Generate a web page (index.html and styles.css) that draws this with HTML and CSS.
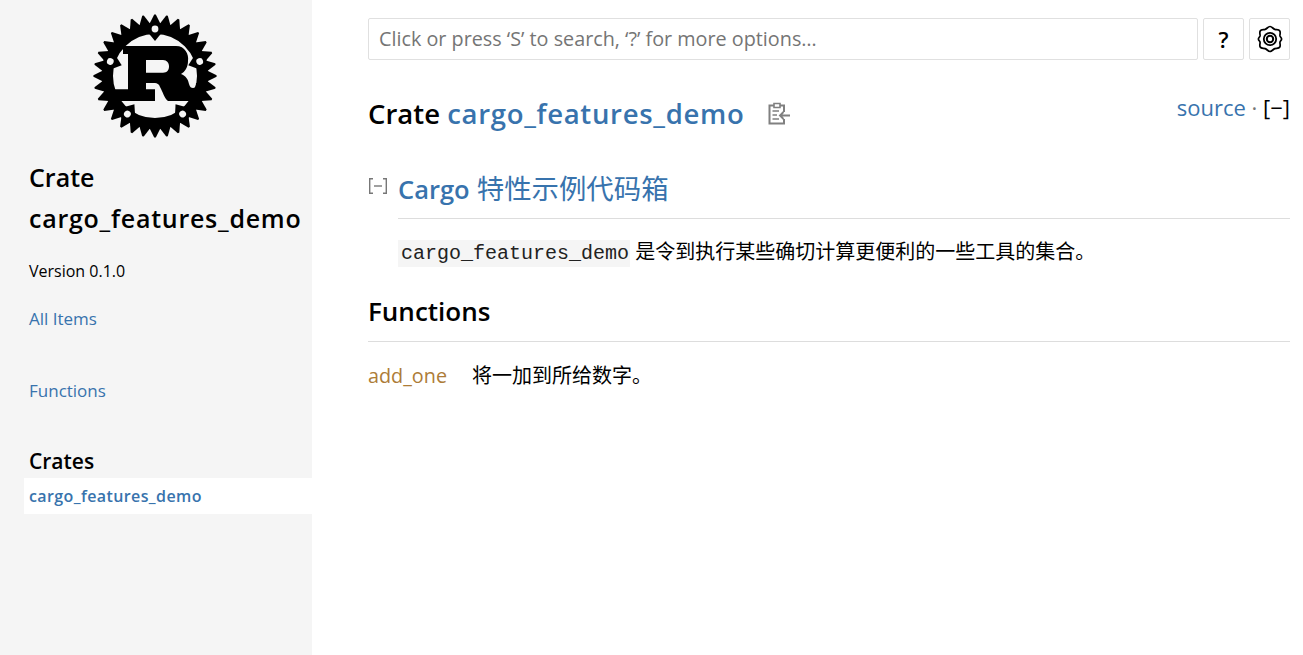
FILE: index.html
```html
<!DOCTYPE html>
<html lang="en">
<head>
  <meta charset="UTF-8">
  <meta name="viewport" content="width=device-width, initial-scale=1.0">
  <title>cargo_features_demo - Rust</title>
  <link rel="stylesheet" href="styles.css">
</head>
<body>
  <nav class="sidebar">
    <a class="logo" href="#">
      <svg width="124" height="124" viewBox="-62 -62 124 124">
        <defs>
          <polygon id="t1" points="-5.6,-52 -0.8,-61.6 0.8,-61.6 5.6,-52"/>
          <g id="t2"><use href="#t1"/><use href="#t1" transform="rotate(11.25)"/></g>
          <g id="t4"><use href="#t2"/><use href="#t2" transform="rotate(22.5)"/></g>
          <g id="t8"><use href="#t4"/><use href="#t4" transform="rotate(45)"/></g>
          <g id="t16"><use href="#t8"/><use href="#t8" transform="rotate(90)"/></g>
          <g id="lug">
            <polygon points="-9,-46 9,-46 0,-35"/>
            <circle cx="0" cy="-47" r="7"/>
          </g>
          <circle id="hole" cx="0" cy="-47" r="3.4" fill="#f5f5f5"/>
        </defs>
        <use href="#t16"/><use href="#t16" transform="rotate(180)"/>
        <circle r="47.5" fill="none" stroke="#000" stroke-width="11" cx="0" cy="0"/>
        <use href="#lug"/>
        <use href="#lug" transform="rotate(72)"/>
        <use href="#lug" transform="rotate(144)"/>
        <use href="#lug" transform="rotate(216)"/>
        <use href="#lug" transform="rotate(288)"/>
        <use href="#hole"/>
        <use href="#hole" transform="rotate(72)"/>
        <use href="#hole" transform="rotate(144)"/>
        <use href="#hole" transform="rotate(216)"/>
        <use href="#hole" transform="rotate(288)"/>
        <path fill-rule="evenodd" d="M-32,-30 H21 C30,-30 34,-22 33,-15 C33,-9 30,-4 26,-2 C31,0 33,3 34,8 C35,11 36,12 38,12 C40,12 41,10 41,7 H45 V25 H13 C9,22 8,16 5,11 C4,8 2,7 0,7 H-9 V13.3 H0 V25 H-44 V13.3 H-27 V-22 H-32 Z M-9,-16 H8 C12,-16 14,-13 14,-9.5 C14,-6 12,-3.3 8,-3.3 H-9 Z"/>
      </svg>
    </a>
    <h2 class="crate-title">Crate<br><span class="crate-name">cargo_features_demo</span></h2>
    <p class="version">Version 0.1.0</p>
    <a class="side-link all-items" href="#">All Items</a>
    <a class="side-link functions-link" href="#">Functions</a>
    <h3 class="crates-head">Crates</h3>
    <a class="current-crate" href="#">cargo_features_demo</a>
  </nav>

  <main class="content">
    <div class="search-row">
      <input class="search" type="text" placeholder="Click or press ‘S’ to search, ‘?’ for more options…">
      <button class="square-btn">?</button>
      <button class="square-btn">
        <svg width="26" height="28" viewBox="0 0 26 28" fill="none" stroke="#000">
          <path stroke-width="1.7" d="M13,1.5 C15,1.5 16,3.8 17.8,4.4 C19.6,5 21.8,4.2 22.8,6 C23.8,7.8 22.6,9.6 23,11 C23.4,12.2 24.6,12.6 24.6,14 C24.6,15.4 23.4,15.8 23,17 C22.6,18.4 23.8,20.2 22.8,22 C21.8,23.8 19.6,23 17.8,23.6 C16,24.2 15,26.5 13,26.5 C11,26.5 10,24.2 8.2,23.6 C6.4,23 4.2,23.8 3.2,22 C2.2,20.2 3.4,18.4 3,17 C2.6,15.8 1.4,15.4 1.4,14 C1.4,12.6 2.6,12.2 3,11 C3.4,9.6 2.2,7.8 3.2,6 C4.2,4.2 6.4,5 8.2,4.4 C10,3.8 11,1.5 13,1.5 Z"/>
          <circle cx="13" cy="14" r="6.2" stroke-width="1.8"/>
          <circle cx="13" cy="14" r="3.2" stroke-width="2"/>
        </svg>
      </button>
    </div>

    <div class="title-row">
      <h1 class="page-title">Crate <a href="#">cargo_features_demo</a>
        <svg class="copy-icon" width="22" height="23" viewBox="0 0 22 23" fill="none" stroke="#808080" stroke-width="2">
          <path d="M6,3.5 H1.5 V21.5 H16 V17"/>
          <path d="M16,10 V3.5 H12"/>
          <path d="M6,1.5 H12 V5.5 H6 Z" stroke-width="1.6"/>
          <path d="M4.5,9 H11 M4.5,13 H9 M4.5,17 H11" stroke-width="1.7"/>
          <path d="M22,13.5 H12 M15.5,10 L12,13.5 L15.5,17" stroke-width="1.9"/>
        </svg>
      </h1>
      <div class="out-of-band"><a href="#">source</a> <span class="dot">·</span> <span class="toggle-all">[−]</span></div>
    </div>

    <section class="docblock">
      <svg class="toggle-box" width="18" height="16" viewBox="0 0 18 16" fill="none" stroke="#777" stroke-width="1.4">
        <path d="M4,0.7 H0.7 V15.3 H4"/>
        <path d="M14,0.7 H17.3 V15.3 H14"/>
        <path d="M5,8 H13"/>
      </svg>
      <div class="doc-body">
        <h2 class="doc-head"><strong>Cargo</strong> 特性示例代码箱</h2>
        <p class="doc-text"><code>cargo_features_demo</code> 是令到执行某些确切计算更便利的一些工具的集合。</p>
      </div>
    </section>

    <h2 class="section-head">Functions</h2>
    <div class="item-row">
      <a class="fn-link" href="#">add_one</a>
      <span class="fn-desc">将一加到所给数字。</span>
    </div>
  </main>
</body>
</html>
```

FILE: styles.css
```css
* {
  box-sizing: border-box;
}
html, body {
  height: 100%;
}
body {
  margin: 0;
  display: flex;
  overflow: hidden;
  background-color: #fff;
  color: #000;
  font-family: "Open Sans", "Noto Sans CJK SC", sans-serif;
  font-size: 20px;
}
a {
  color: #3873ad;
  text-decoration: none;
}

/* sidebar */
.sidebar {
  width: 312px;
  flex-shrink: 0;
  background-color: #f5f5f5;
  padding: 14px 0 0 24px;
}
.logo {
  display: block;
  width: 124px;
  height: 124px;
  margin-left: 69px;
}
.logo svg {
  display: block;
}
.crate-title {
  margin: 19px 0 0 5px;
  font-size: 25px;
  font-weight: 600;
  line-height: 41px;
  white-space: nowrap;
}
.crate-name {
  letter-spacing: 0.75px;
}
.version {
  margin: 20px 0 0 5px;
  font-size: 16px;
  line-height: 24px;
}
.side-link {
  display: block;
  margin-left: 5px;
  font-size: 17px;
  line-height: 24px;
}
.all-items {
  margin-top: 24px;
}
.functions-link {
  margin-top: 48px;
}
.crates-head {
  margin: 46px 0 0 5px;
  font-size: 21px;
  font-weight: 600;
  line-height: 24px;
}
.current-crate {
  display: block;
  height: 36px;
  margin-top: 5px;
  padding-left: 5px;
  background-color: #fff;
  font-size: 16px;
  font-weight: 600;
  letter-spacing: 0.4px;
  line-height: 36px;
}

/* main column */
.content {
  flex: 1;
  min-width: 0;
  padding: 18px 13px 0 56px;
}
.search-row {
  display: flex;
  gap: 5px;
  height: 42px;
}
.search {
  flex: 1;
  min-width: 0;
  padding: 0 10px 2px;
  border: 1px solid #e0e0e0;
  border-radius: 2px;
  font-family: inherit;
  font-size: 19.8px;
  color: #000;
}
.search::placeholder {
  color: #757575;
  opacity: 1;
}
.square-btn {
  display: flex;
  align-items: center;
  justify-content: center;
  width: 41px;
  padding: 0;
  border: 1px solid #e0e0e0;
  border-radius: 2px;
  background-color: #fff;
  color: #000;
  font-family: inherit;
  font-size: 22px;
  font-weight: 600;
}

.title-row {
  display: flex;
  justify-content: space-between;
  align-items: flex-start;
  margin-top: 32px;
}
.page-title {
  margin: 0;
  font-size: 27.5px;
  font-weight: 600;
  line-height: 44px;
}
.page-title a {
  letter-spacing: 0.7px;
}
.copy-icon {
  margin-left: 16px;
  vertical-align: -1px;
}
.out-of-band {
  font-size: 22px;
  line-height: 30px;
}
.dot {
  color: #777;
}

.docblock {
  display: flex;
  margin-top: 33px;
}
.toggle-box {
  flex-shrink: 0;
  margin: 9px 11px 0 1px;
}
.doc-body {
  flex: 1;
  min-width: 0;
}
.doc-head {
  margin: 0;
  padding-bottom: 9px;
  border-bottom: 1px solid #ddd;
  color: #3873ad;
  font-size: 27.4px;
  font-weight: 400;
  line-height: 40px;
}
.doc-head strong {
  font-size: 25.5px;
  font-weight: 600;
}
.doc-text {
  margin: 17px 0 0;
  line-height: 32px;
}
.doc-text code {
  padding: 2px 1px 2px 3px;
  background-color: #f5f5f5;
  color: #222;
  font-family: "Liberation Mono", monospace;
  font-size: 20px;
}

.section-head {
  margin: 23px 0 0;
  padding-bottom: 12px;
  border-bottom: 1px solid #ddd;
  font-size: 26px;
  font-weight: 600;
  line-height: 36px;
}
.item-row {
  display: flex;
  margin-top: 17px;
  line-height: 33px;
}
.fn-link {
  width: 104px;
  color: #ad7c37;
  font-size: 19.8px;
}
```
